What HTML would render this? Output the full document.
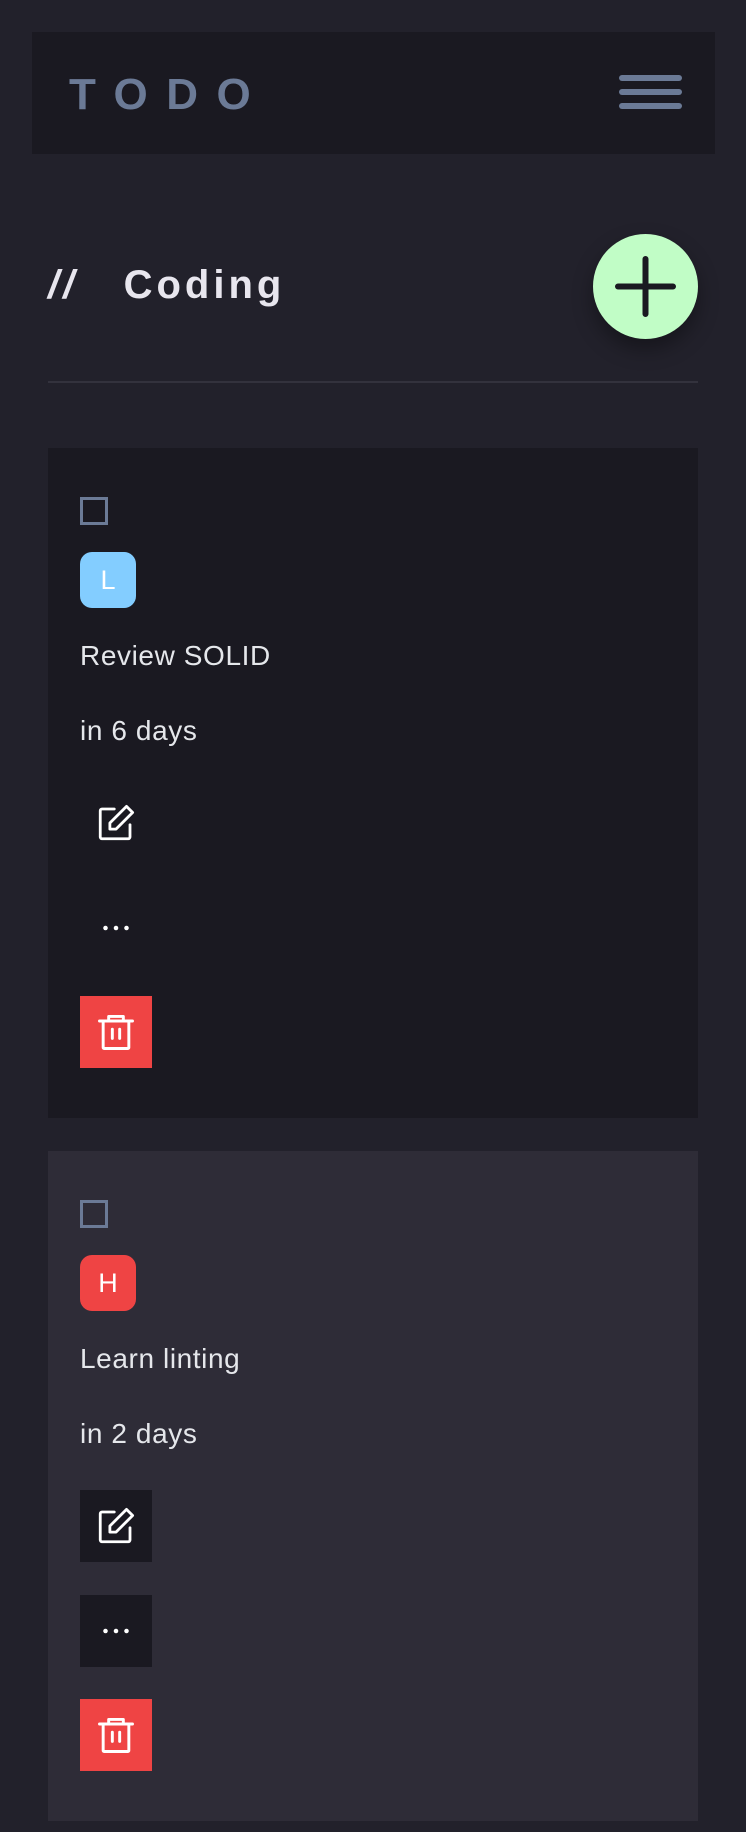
<!DOCTYPE html>
<html><head><meta charset="utf-8"><style>
*{margin:0;padding:0;box-sizing:border-box}
body{width:746px;height:1832px;background:#22212b;font-family:"Liberation Sans",sans-serif;position:relative;overflow:hidden}
.hdr{position:absolute;left:32px;top:32px;width:683px;height:122px;background:#1a1921}
.logo{position:absolute;font-size:44px;font-weight:bold;letter-spacing:0.42em;color:#6b7a96;line-height:54px}
.hb{position:absolute;width:63px;height:6px;border-radius:3px;background:#6b7a96}
.title{position:absolute;left:48px;top:258px;font-size:40px;font-weight:bold;color:#e8e6ee;letter-spacing:4px;line-height:54px}
.plus{position:absolute;left:593px;top:234px;width:105px;height:105px;border-radius:50%;background:#c1fdc6;box-shadow:0 10px 20px rgba(0,0,0,.35)}
.div{position:absolute;left:48px;top:381px;width:650px;height:2px;background:#33323d}
.card{position:absolute;left:48px;width:650px;height:670px}
.cb{position:absolute;left:32px;top:49px;width:28px;height:28px;border:3.5px solid #6b7a96}
.av{position:absolute;left:32px;top:104px;width:56px;height:56px;border-radius:12px;color:#fff;font-size:27px;text-align:center;line-height:56px}
.t{position:absolute;left:32px;font-size:28px;color:#e5e7eb;line-height:34px;letter-spacing:0.6px}
.btn{position:absolute;left:32px;width:72px;height:72px;display:flex;align-items:center;justify-content:center}
</style></head><body>
<div class="hdr"><div class="logo" style="left:37px;top:36px">TODO</div>
<div class="hb" style="left:587px;top:43px"></div><div class="hb" style="left:587px;top:57px"></div><div class="hb" style="left:587px;top:71px"></div></div>
<div class="title"><span style="font-style:italic">//</span>&nbsp;&nbsp;&nbsp;Coding</div>
<div class="plus"><svg width="105" height="105" viewBox="0 0 105 105"><path d="M52.5 25v55M25 52.5h55" stroke="#1a1921" stroke-width="6" stroke-linecap="round"/></svg></div>
<div class="div"></div>

<div class="card" style="top:448px;background:#1a1921">
<div class="cb"></div><div class="av" style="background:#83cdff">L</div>
<div class="t" style="top:191px">Review SOLID</div>
<div class="t" style="top:266px">in 6 days</div>
<div class="btn" style="top:339px"><svg width="42" height="42" viewBox="0 0 24 24" fill="none" stroke="#fff" stroke-width="1.6" stroke-linecap="round" stroke-linejoin="round"><path d="M11 4H4a1 1 0 0 0-1 1v15a1 1 0 0 0 1 1h15a1 1 0 0 0 1-1v-7"/><path d="M18 2.5l3.5 3.5L12 15.5H8.5V12z"/></svg></div>
<div class="btn" style="top:444px"><svg width="42" height="42" viewBox="0 0 24 24" fill="#fff"><circle cx="6" cy="12" r="1.3"/><circle cx="12" cy="12" r="1.3"/><circle cx="18" cy="12" r="1.3"/></svg></div>
<div class="btn" style="top:548px;background:#ef4444"><svg width="44" height="44" viewBox="0 0 24 24" fill="none" stroke="#fff" stroke-width="1.6" stroke-linecap="round" stroke-linejoin="round"><path d="M3 6h18M8 6V3.5h8V6M5 6v14.5a.5.5 0 0 0 .5.5h13a.5.5 0 0 0 .5-.5V6M10 10.5v5M14 10.5v5"/></svg></div>
</div>

<div class="card" style="top:1151px;background:#2e2c37">
<div class="cb"></div><div class="av" style="background:#ef4444">H</div>
<div class="t" style="top:191px">Learn linting</div>
<div class="t" style="top:266px">in 2 days</div>
<div class="btn" style="top:339px;background:#1a1921"><svg width="42" height="42" viewBox="0 0 24 24" fill="none" stroke="#fff" stroke-width="1.6" stroke-linecap="round" stroke-linejoin="round"><path d="M11 4H4a1 1 0 0 0-1 1v15a1 1 0 0 0 1 1h15a1 1 0 0 0 1-1v-7"/><path d="M18 2.5l3.5 3.5L12 15.5H8.5V12z"/></svg></div>
<div class="btn" style="top:444px;background:#1a1921"><svg width="42" height="42" viewBox="0 0 24 24" fill="#fff"><circle cx="6" cy="12" r="1.3"/><circle cx="12" cy="12" r="1.3"/><circle cx="18" cy="12" r="1.3"/></svg></div>
<div class="btn" style="top:548px;background:#ef4444"><svg width="44" height="44" viewBox="0 0 24 24" fill="none" stroke="#fff" stroke-width="1.6" stroke-linecap="round" stroke-linejoin="round"><path d="M3 6h18M8 6V3.5h8V6M5 6v14.5a.5.5 0 0 0 .5.5h13a.5.5 0 0 0 .5-.5V6M10 10.5v5M14 10.5v5"/></svg></div>
</div>
</body></html>
